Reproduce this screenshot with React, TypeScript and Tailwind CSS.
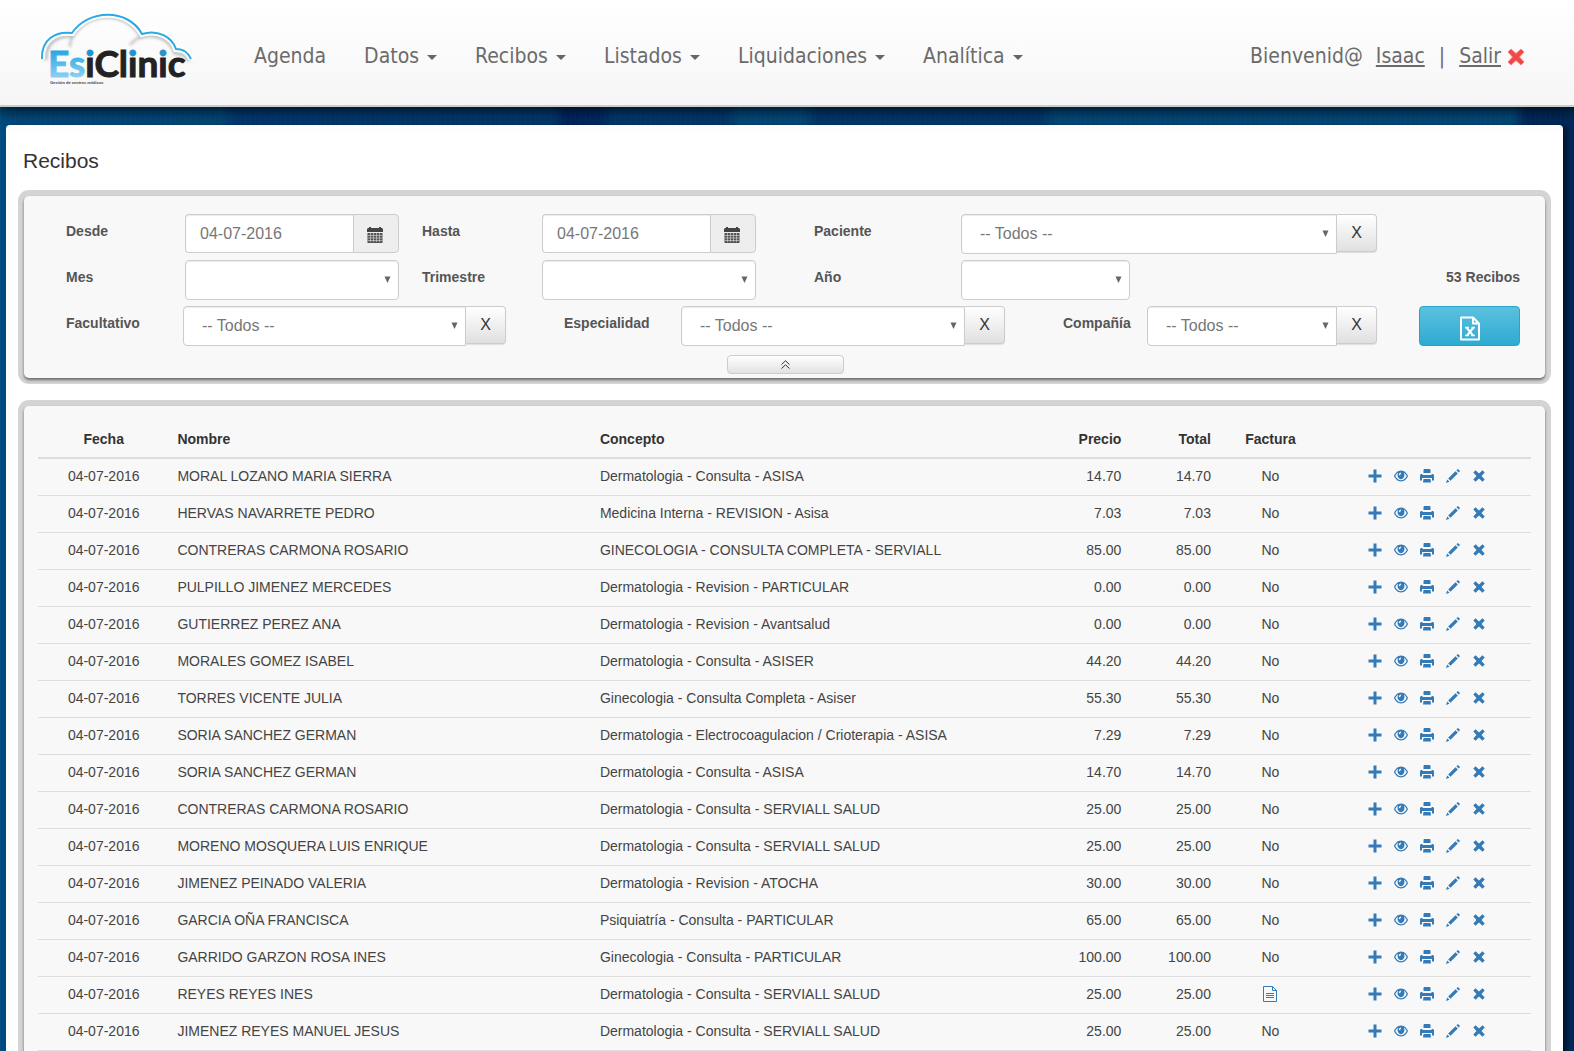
import React from 'react';

interface Receipt {
  date: string;
  name: string;
  concept: string;
  price: string;
  invoiced?: boolean;
}

const DATE = '04-07-2016';

const receipts: Receipt[] = [
  { date: DATE, name: 'MORAL LOZANO MARIA SIERRA', concept: 'Dermatologia - Consulta - ASISA', price: '14.70' },
  { date: DATE, name: 'HERVAS NAVARRETE PEDRO', concept: 'Medicina Interna - REVISION - Asisa', price: '7.03' },
  { date: DATE, name: 'CONTRERAS CARMONA ROSARIO', concept: 'GINECOLOGIA - CONSULTA COMPLETA - SERVIALL', price: '85.00' },
  { date: DATE, name: 'PULPILLO JIMENEZ MERCEDES', concept: 'Dermatologia - Revision - PARTICULAR', price: '0.00' },
  { date: DATE, name: 'GUTIERREZ PEREZ ANA', concept: 'Dermatologia - Revision - Avantsalud', price: '0.00' },
  { date: DATE, name: 'MORALES GOMEZ ISABEL', concept: 'Dermatologia - Consulta - ASISER', price: '44.20' },
  { date: DATE, name: 'TORRES VICENTE JULIA', concept: 'Ginecologia - Consulta Completa - Asiser', price: '55.30' },
  { date: DATE, name: 'SORIA SANCHEZ GERMAN', concept: 'Dermatologia - Electrocoagulacion / Crioterapia - ASISA', price: '7.29' },
  { date: DATE, name: 'SORIA SANCHEZ GERMAN', concept: 'Dermatologia - Consulta - ASISA', price: '14.70' },
  { date: DATE, name: 'CONTRERAS CARMONA ROSARIO', concept: 'Dermatologia - Consulta - SERVIALL SALUD', price: '25.00' },
  { date: DATE, name: 'MORENO MOSQUERA LUIS ENRIQUE', concept: 'Dermatologia - Consulta - SERVIALL SALUD', price: '25.00' },
  { date: DATE, name: 'JIMENEZ PEINADO VALERIA', concept: 'Dermatologia - Revision - ATOCHA', price: '30.00' },
  { date: DATE, name: 'GARCIA OÑA FRANCISCA', concept: 'Psiquiatría - Consulta - PARTICULAR', price: '65.00' },
  { date: DATE, name: 'GARRIDO GARZON ROSA INES', concept: 'Ginecologia - Consulta - PARTICULAR', price: '100.00' },
  { date: DATE, name: 'REYES REYES INES', concept: 'Dermatologia - Consulta - SERVIALL SALUD', price: '25.00', invoiced: true },
  { date: DATE, name: 'JIMENEZ REYES MANUEL JESUS', concept: 'Dermatologia - Consulta - SERVIALL SALUD', price: '25.00' },
];

const menus = ['Datos', 'Recibos', 'Listados', 'Liquidaciones', 'Analítica'];

const Logo: React.FC = () => (
  <svg width="154" height="74" viewBox="0 0 154 74" role="img" aria-label="EsiClinic">
    <defs>
      <linearGradient id="logoBlue" gradientUnits="userSpaceOnUse" x1="0" y1="36" x2="0" y2="66">
        <stop offset="0" stopColor="#1ba3e0" />
        <stop offset="1" stopColor="#8fd0f5" />
      </linearGradient>
      {/* blue dot over a dark stem */}
      <linearGradient id="logoDot" gradientUnits="userSpaceOnUse" x1="0" y1="0" x2="0" y2="74">
        <stop offset="0.59" stopColor="#2394cf" />
        <stop offset="0.59" stopColor="#222" />
      </linearGradient>
      <filter id="logoSoft" x="-10%" y="-10%" width="120%" height="120%">
        <feGaussianBlur stdDeviation="1.5" />
      </filter>
    </defs>
    <g fill="none" stroke="#8a8a8a" strokeOpacity="0.6" strokeWidth="3" filter="url(#logoSoft)">
      <path d="M6 48C5 31 17 23 33 24C47 -1 87 -2 101 25C117 21 131 28 135 41C143 41 147 45 149 49" />
      <path d="M33 24C31 27 30 31 30 35" strokeWidth="2" />
      <path d="M101 25C96 27 92 30 90 33" strokeWidth="2" />
    </g>
    <path d="M2 47C1 27 16 19 32 21C48 -3 88 -4 102 22C118 17 132 25 136 37C144 37 149 42 151 47" fill="none" stroke="#fff" strokeWidth="6" />
    <path d="M2 47C1 27 16 19 32 21C48 -3 88 -4 102 22C118 17 132 25 136 37C144 37 149 42 151 47" fill="none" stroke="#2ba9e6" strokeWidth="2" />
    <text x="8" y="65" fontFamily="Lato, sans-serif" fontSize="37" fontWeight="700" fill="#222" stroke="#222" strokeWidth="1">
      <tspan fill="url(#logoBlue)" stroke="url(#logoBlue)">Es</tspan>
      <tspan fill="url(#logoDot)" stroke="url(#logoDot)">i</tspan>
      <tspan>Cl</tspan>
      <tspan fill="url(#logoDot)" stroke="url(#logoDot)">i</tspan>
      <tspan>n</tspan>
      <tspan fill="url(#logoDot)" stroke="url(#logoDot)">i</tspan>
      <tspan>c</tspan>
    </text>
    <text x="10" y="72" fontFamily="'Liberation Sans', sans-serif" fontSize="4" fontWeight="700" fill="#444">
      Gestión de centros médicos
    </text>
  </svg>
);

const Caret: React.FC = () => (
  <svg width="10" height="5" viewBox="0 0 10 5" className="mt-0.5" aria-hidden="true">
    <path d="M0 0H10L5 5Z" fill="#666" />
  </svg>
);

const RedCross: React.FC = () => (
  <svg width="18" height="18" viewBox="0 0 18 18" aria-hidden="true">
    <path d="M4 1L9 5.500L14 1L17 4L12.500 9L17 14L14 17L9 12.500L4 17L1 14L5.500 9L1 4Z" fill="#f04848" stroke="#fb8080" strokeLinejoin="round" />
  </svg>
);

const CalendarIcon: React.FC = () => (
  <svg width="16" height="16" viewBox="0 0 16 16" aria-hidden="true">
    <path d="M0 2L1 1H2V0H4V1H12V0H14V1H15L16 2V5H0Z" fill="#444" />
    <path d="M0.500 6H15.500V16H0.500Z" fill="#555" />
    <path d="M1 8.500H15M1 11H15M1 13.500H15M3.500 6V15M6.500 6V15M9.500 6V15M12.500 6V15" stroke="#ddd" strokeWidth="0.6" />
  </svg>
);

const actions = [
  { label: 'Añadir', path: 'M5.500 0.500H8.500V5.500H13.500V8.500H8.500V13.500H5.500V8.500H0.500V5.500H5.500Z' },
  {
    label: 'Ver',
    path: 'M7 1.500C3.500 1.500 1 4.500 0 7C1 9.500 3.500 12.500 7 12.500C10.500 12.500 13 9.500 14 7C13 4.500 10.500 1.500 7 1.500ZM4 3.800C2.800 6.800 4.200 10 7 10.300C9.800 10 11.200 6.800 10 3.800C11.200 4.500 12.100 5.700 12.700 7C11.500 9.400 9.500 11.300 7 11.300C4.500 11.300 2.500 9.400 1.300 7C1.900 5.700 2.800 4.500 4 3.800ZM7 3.500C5.700 3.500 4.900 4.500 4.800 6L6.200 6.300C6.200 5.300 6.500 4.800 7.200 4.500Z',
  },
  { label: 'Imprimir', path: 'M4 0H10L10.500 1V4H3.500V1ZM0 6L1 5H2.500V6H11.500V5H13L14 6V11.500H12V9H2V11.500H0ZM3.500 10H10.500L11 13.500H3Z' },
  { label: 'Editar', path: 'M0 14L1.200 10.500L3.500 12.800ZM2.200 9.500L9.500 2.200L11.800 4.500L4.500 11.800ZM10.400 1.300L11.500 0.300C12.300 -0.300 14.300 1.700 13.700 2.500L12.700 3.600Z' },
  { label: 'Eliminar', path: 'M3.500 1.300L7 4.500L10.500 1.300L12.700 3.500L9.500 7L12.700 10.500L10.500 12.700L7 9.500L3.500 12.700L1.300 10.500L4.500 7L1.300 3.500Z' },
];

const ExcelIcon: React.FC = () => (
  <svg width="22" height="25" viewBox="0 0 22 25" fill="none" stroke="#fff" strokeWidth="2" aria-hidden="true">
    <path d="M2 1.500H14L20 7.500V23.500H2ZM14 1.500V7.500H20" strokeLinejoin="round" />
    <path d="M7.500 11.500L14 19.500M14.500 11.500L8 19.500" />
    <path d="M6 11.500H10M12.500 11.500H16M6 19.500H10M12 19.500H16" strokeWidth="1.500" />
  </svg>
);

const InvoiceIcon: React.FC = () => (
  <svg width="14" height="16" viewBox="0 0 14 16" fill="none" stroke="#337ab7" aria-hidden="true">
    <path d="M0.500 0.500H9.500L13.500 4.500V15.500H0.500ZM9.500 0.500V4.500H13.500M3 7.500H11M3 9.500H11M3 11.500H11" />
  </svg>
);

interface LabelProps {
  htmlFor: string;
  className?: string;
  children: React.ReactNode;
}

const Label: React.FC<LabelProps> = ({ htmlFor, className = '', children }) => (
  <label htmlFor={htmlFor} className={`pt-[7px] text-sm leading-5 font-bold text-[#555] ${className}`}>
    {children}
  </label>
);

const DateField: React.FC<{ id: string }> = ({ id }) => (
  <div className="flex h-[39px] min-w-0">
    <input
      id={id}
      type="text"
      defaultValue={DATE}
      className="w-full min-w-0 flex-1 rounded-l border border-r-0 border-[#ccc] bg-white px-[14px] text-base text-[#777] shadow-[inset_0_1px_1px_rgba(0,0,0,0.08)]"
    />
    <button type="button" aria-label="Abrir calendario" className="flex w-[46px] items-center justify-center rounded-r border border-[#ccc] bg-[#eee] pt-0.5 pr-0.5">
      <CalendarIcon />
    </button>
  </div>
);

interface SelectFieldProps {
  id: string;
  text?: string;
  clearable?: boolean;
}

const SelectField: React.FC<SelectFieldProps> = ({ id, text = '', clearable }) => (
  <div className="flex min-w-0 items-start">
    <div className="relative min-w-0 flex-1">
      <select
        id={id}
        className={`h-10 w-full appearance-none border border-[#ccc] bg-white px-[18px] text-base text-[#777] shadow-[inset_0_1px_1px_rgba(0,0,0,0.08)] ${clearable ? 'rounded-l' : 'rounded'}`}
      >
        <option>{text}</option>
      </select>
      <svg width="7" height="7" viewBox="0 0 7 7" className="pointer-events-none absolute top-4 right-2" aria-hidden="true">
        <path d="M0.500 0.500H6.500L3.500 7Z" fill="#666" />
      </svg>
    </div>
    {clearable && (
      <button
        type="button"
        aria-label={`Limpiar ${id}`}
        className="h-[38px] w-10 rounded-r border border-l-0 border-[#ccc] bg-linear-to-b from-white to-[#e0e0e0] text-base text-[#333] shadow-[0_1px_1px_rgba(0,0,0,0.1)]"
      >
        X
      </button>
    )}
  </div>
);

const Panel: React.FC<{ className: string; children: React.ReactNode }> = ({ className, children }) => (
  <div className="rounded-[11px] bg-[#d4d4d4] p-1.5">
    <div className={`rounded-[5px] bg-[#f8f8f8] shadow-[0_2px_3px_rgba(0,0,0,0.5)] ${className}`}>{children}</div>
  </div>
);

const Header: React.FC = () => (
  <header className="relative flex h-[107px] items-center border-b-2 border-[#ccc] bg-linear-to-b from-white to-[#f6f6f6] pt-2 pr-[49px] pl-10 font-['DejaVu_Sans_Condensed','DejaVu_Sans',sans-serif] text-[21px] text-[#6b6b6b] shadow-[0_2px_14px_2px_rgba(0,0,0,0.75)]">
    <a href="#" className="mb-4 shrink-0">
      <Logo />
    </a>
    <nav className="ml-[60px] flex items-center gap-[38px]">
      <a href="#">Agenda</a>
      {menus.map((menu) => (
        <button key={menu} type="button" className="flex items-center gap-2">
          {menu}
          <Caret />
        </button>
      ))}
    </nav>
    <div className="ml-auto flex items-center">
      <span>Bienvenid@</span>
      <a href="#" className="ml-[13px] underline">Isaac</a>
      <span className="mx-[14px]">|</span>
      <a href="#" className="flex items-center gap-1.5 underline">
        Salir
        <RedCross />
      </a>
    </div>
  </header>
);

const Filters: React.FC = () => (
  <form>
    <Panel className="flex flex-col gap-1.5 pt-[18px] pr-[25px] pb-1 pl-[42px]">
      <div className="grid h-10 grid-cols-[119fr_214fr_143fr_214fr_205fr_416fr_143fr] items-start">
        <Label htmlFor="desde">Desde</Label>
        <DateField id="desde" />
        <Label htmlFor="hasta" className="pl-[23px]">Hasta</Label>
        <DateField id="hasta" />
        <Label htmlFor="paciente" className="pl-[58px]">Paciente</Label>
        <SelectField id="paciente" text="-- Todos --" clearable />
      </div>
      <div className="grid h-10 grid-cols-[119fr_214fr_143fr_214fr_205fr_169fr_390fr] items-start">
        <Label htmlFor="mes">Mes</Label>
        <SelectField id="mes" />
        <Label htmlFor="trimestre" className="pl-[23px]">Trimestre</Label>
        <SelectField id="trimestre" />
        <Label htmlFor="anio" className="pl-[58px]">Año</Label>
        <SelectField id="anio" />
        <p className="pt-[7px] text-right text-sm leading-5 font-bold text-[#555]">53 Recibos</p>
      </div>
      <div className="grid h-10 grid-cols-[117fr_323fr_175fr_324fr_142fr_230fr_143fr] items-start">
        <Label htmlFor="facultativo">Facultativo</Label>
        <SelectField id="facultativo" text="-- Todos --" clearable />
        <Label htmlFor="especialidad" className="pl-[58px]">Especialidad</Label>
        <SelectField id="especialidad" text="-- Todos --" clearable />
        <Label htmlFor="compania" className="pl-[58px]">Compañía</Label>
        <SelectField id="compania" text="-- Todos --" clearable />
        <div className="pl-[42px]">
          <button
            type="button"
            aria-label="Exportar a Excel"
            className="flex h-10 w-full items-center justify-center rounded border border-[#28a4c9] bg-linear-to-b from-[#5bc0de] to-[#2aabd2] pt-1"
          >
            <ExcelIcon />
          </button>
        </div>
      </div>
      <button
        type="button"
        aria-label="Ocultar filtros"
        className="mt-[3px] mr-4 flex h-[19px] w-[117px] items-center justify-center self-center rounded border border-[#ccc] bg-linear-to-b from-white to-[#e2e2e2]"
      >
        <svg width="9" height="9" viewBox="0 0 9 9" fill="none" stroke="#333" aria-hidden="true">
          <path d="M0.500 4.500L4.500 0.800L8.500 4.500M0.500 8.500L4.500 4.800L8.500 8.500" />
        </svg>
      </button>
    </Panel>
  </form>
);

const ReceiptsTable: React.FC = () => (
  <Panel className="px-[14px] pt-[15px] pb-4">
    <table className="w-full table-fixed border-collapse text-sm leading-5 text-[#444]">
      <colgroup>
        <col className="w-[8.8%]" />
        <col className="w-[28.3%]" />
        <col className="w-[30%]" />
        <col className="w-[6%]" />
        <col className="w-[6%]" />
        <col className="w-[6.9%]" />
        <col className="w-[14%]" />
      </colgroup>
      <thead>
        <tr className="border-b-2 border-[#ddd] text-[#333]">
          <th className="p-2">Fecha</th>
          <th className="p-2 text-left">Nombre</th>
          <th className="p-2 text-left">Concepto</th>
          <th className="p-2 text-right">Precio</th>
          <th className="p-2 text-right">Total</th>
          <th className="p-2">Factura</th>
          <th className="p-2" aria-label="Acciones" />
        </tr>
      </thead>
      <tbody>
        {receipts.map((receipt, index) => (
          <tr key={index} className="border-b border-[#ddd]">
            <td className="px-2 pt-[7px] pb-[9px] text-center">{receipt.date}</td>
            <td className="px-2 pt-[7px] pb-[9px]">{receipt.name}</td>
            <td className="px-2 pt-[7px] pb-[9px]">{receipt.concept}</td>
            <td className="px-2 pt-[7px] pb-[9px] text-right">{receipt.price}</td>
            <td className="px-2 pt-[7px] pb-[9px] text-right">{receipt.price}</td>
            <td className="px-2 pt-[7px] pb-[9px] text-center">
              {receipt.invoiced ? (
                <a href="#" aria-label="Ver factura" className="flex justify-center">
                  <InvoiceIcon />
                </a>
              ) : (
                'No'
              )}
            </td>
            <td className="pt-[7px] pr-1.5 pb-[9px] pl-2">
              <div className="flex h-5 items-center justify-center gap-3">
                {actions.map((action) => (
                  <button key={action.label} type="button" aria-label={action.label}>
                    <svg width="14" height="14" viewBox="0 0 14 14" fill="#337ab7" fillRule="evenodd" aria-hidden="true">
                      <path d={action.path} />
                    </svg>
                  </button>
                ))}
              </div>
            </td>
          </tr>
        ))}
      </tbody>
    </table>
  </Panel>
);

const App: React.FC = () => (
  <div className="min-h-screen bg-[#003a6e] bg-[repeating-linear-gradient(90deg,rgba(255,255,255,0.02)_0_1px,transparent_1px_5px),linear-gradient(90deg,#004b80_0%,#00497c_14%,#003a74_15%,#003a70_35%,#002563_36%,#002a66_38%,#003a70_39%,#00396f_46%,#004a7d_47%,#004a7d_51%,#00386f_52%,#00386f_66%,#004a7d_67%,#004a7d_96%,#002a60_97%,#002a5c_100%)] font-['Liberation_Sans',Arial,sans-serif]">
    <Header />
    <main className="mt-[18px] mr-[11px] ml-[6px] rounded bg-white px-3 pb-4 shadow-[4px_2px_6px_rgba(0,0,0,0.6)]">
      <h1 className="pt-[22px] pb-[15px] pl-[5px] text-[21px] leading-7 text-[#333]">Recibos</h1>
      <Filters />
      <div className="mt-4">
        <ReceiptsTable />
      </div>
    </main>
  </div>
);

export default App;
